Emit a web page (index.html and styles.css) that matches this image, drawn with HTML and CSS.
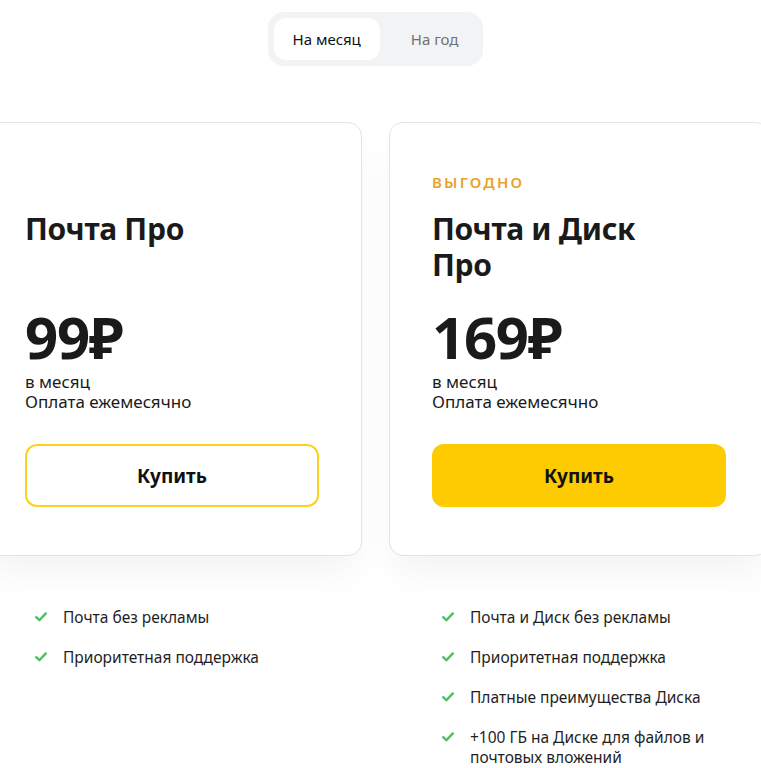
FILE: index.html
```html
<!DOCTYPE html>
<html lang="ru">
<head>
<meta charset="utf-8">
<title>Тарифы</title>
<link rel="stylesheet" href="styles.css">
</head>
<body>
<div class="page">
  <div class="toggle-wrap">
    <div class="toggle">
      <div class="tab tab-active">На месяц</div>
      <div class="tab">На год</div>
    </div>
  </div>
  <div class="plans">
    <div class="plan">
      <div class="card">
        <div class="label"></div>
        <div class="title">Почта Про</div>
        <div class="price">99₽</div>
        <div class="period">в месяц<br>Оплата ежемесячно</div>
        <button class="btn btn-outline">Купить</button>
      </div>
      <ul class="features">
        <li><svg class="check" viewBox="0 0 12 10"><path d="M1.2 5.2 L4.4 8.2 L10.8 1.4" /></svg><span>Почта без рекламы</span></li>
        <li><svg class="check" viewBox="0 0 12 10"><path d="M1.2 5.2 L4.4 8.2 L10.8 1.4" /></svg><span>Приоритетная поддержка</span></li>
      </ul>
    </div>
    <div class="plan">
      <div class="card">
        <div class="label">ВЫГОДНО</div>
        <div class="title">Почта и Диск<br>Про</div>
        <div class="price">169₽</div>
        <div class="period">в месяц<br>Оплата ежемесячно</div>
        <button class="btn btn-fill">Купить</button>
      </div>
      <ul class="features">
        <li><svg class="check" viewBox="0 0 12 10"><path d="M1.2 5.2 L4.4 8.2 L10.8 1.4" /></svg><span>Почта и Диск без рекламы</span></li>
        <li><svg class="check" viewBox="0 0 12 10"><path d="M1.2 5.2 L4.4 8.2 L10.8 1.4" /></svg><span>Приоритетная поддержка</span></li>
        <li><svg class="check" viewBox="0 0 12 10"><path d="M1.2 5.2 L4.4 8.2 L10.8 1.4" /></svg><span>Платные преимущества Диска</span></li>
        <li><svg class="check" viewBox="0 0 12 10"><path d="M1.2 5.2 L4.4 8.2 L10.8 1.4" /></svg><span>+100 ГБ на Диске для файлов и<br>почтовых вложений</span></li>
      </ul>
    </div>
  </div>
</div>
</body>
</html>
```

FILE: styles.css
```css
* { box-sizing: border-box; }
html, body { margin: 0; padding: 0; background: #fff; overflow: hidden; }
body {
  font-family: "Noto Sans", "Liberation Sans", sans-serif;
  color: #1f1f1f;
}
.page {
  width: 751px;
  padding-top: 12px;
}
.toggle-wrap {
  display: flex;
  justify-content: center;
}
.toggle {
  display: flex;
  gap: 12px;
  padding: 6px;
  background: #f2f3f5;
  border-radius: 16px;
}
.tab {
  height: 42px;
  padding: 0 19px;
  display: flex;
  align-items: center;
  font-size: 15px;
  color: #707070;
  border-radius: 12px;
}
.tab-active {
  background: #fff;
  color: #111;
}
.plans {
  display: flex;
  justify-content: center;
  gap: 27px;
  margin-top: 56px;
}
.plan {
  width: 380px;
  flex: none;
}
.card {
  border: 1px solid #e3e3e3;
  border-radius: 14px;
  padding: 49px 42px 48px;
  background: #fff;
  box-shadow: 0 22px 36px -6px rgba(0, 0, 0, 0.05);
}
.label {
  height: 20px;
  line-height: 20px;
  font-size: 15px;
  font-weight: 600;
  letter-spacing: 2.2px;
  color: #eba12b;
}
.title {
  margin-top: 19px;
  min-height: 72px;
  font-size: 30px;
  line-height: 36px;
  font-weight: 700;
  letter-spacing: -0.3px;
  color: #1a1a1a;
}
.price {
  margin-top: 22px;
  font-size: 58px;
  line-height: 64px;
  font-weight: 700;
  letter-spacing: -1.3px;
  color: #1a1a1a;
}
.period {
  margin-top: 3px;
  font-size: 17px;
  line-height: 20px;
  color: #1a1a1a;
}
.btn {
  display: block;
  width: 100%;
  height: 63px;
  margin-top: 32px;
  border-radius: 12px;
  font-family: inherit;
  font-size: 19px;
  font-weight: 700;
  color: #111;
  cursor: pointer;
}
.btn-outline {
  background: #fff;
  border: 2px solid #fcd21c;
}
.btn-fill {
  background: #fdcb00;
  border: 2px solid #fdcb00;
}
.features {
  list-style: none;
  margin: 51px 0 0;
  padding: 0 0 0 53px;
  display: flex;
  flex-direction: column;
  gap: 20px;
}
.features li {
  display: flex;
  align-items: flex-start;
  font-size: 15.5px;
  line-height: 20px;
  color: #1f1f1f;
}
.check {
  width: 12px;
  height: 10px;
  margin-top: 5px;
  margin-right: 16px;
  flex: none;
  fill: none;
  stroke: #4cc160;
  stroke-width: 2.4;
  stroke-linecap: round;
  stroke-linejoin: round;
}
```
